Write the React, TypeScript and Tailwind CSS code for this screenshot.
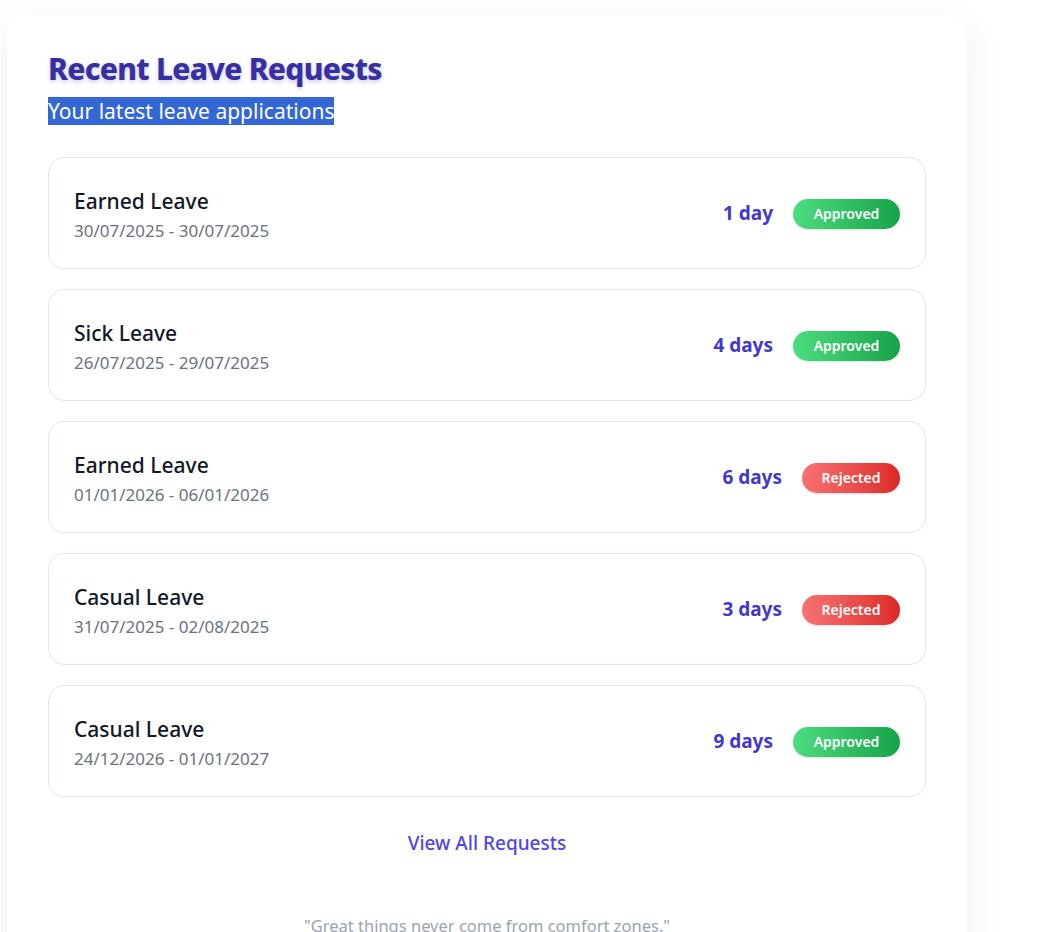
const REQUESTS = [
  { type: "Earned Leave", range: "30/07/2025 - 30/07/2025", days: "1 day", status: "Approved" },
  { type: "Sick Leave", range: "26/07/2025 - 29/07/2025", days: "4 days", status: "Approved" },
  { type: "Earned Leave", range: "01/01/2026 - 06/01/2026", days: "6 days", status: "Rejected" },
  { type: "Casual Leave", range: "31/07/2025 - 02/08/2025", days: "3 days", status: "Rejected" },
  { type: "Casual Leave", range: "24/12/2026 - 01/01/2027", days: "9 days", status: "Approved" },
];

function StatusBadge({ status }: { status: string }) {
  const approved = status === "Approved";
  return (
    <span
      className={
        approved
          ? "inline-flex h-[30px] w-[107px] items-center justify-center rounded-full bg-gradient-to-r from-[#4ade80] to-[#16a34a] text-[14px] font-semibold text-white shadow-sm"
          : "inline-flex h-[30px] w-[98px] items-center justify-center rounded-full bg-gradient-to-r from-[#f87171] to-[#dc2626] text-[14px] font-semibold text-white shadow-sm"
      }
    >
      {status}
    </span>
  );
}

export default function App() {
  return (
    <div
      className="min-h-screen bg-white pl-[7px] pt-[16px]"
      style={{ fontFamily: '"Noto Sans", "Open Sans", sans-serif' }}
    >
      <div className="w-[960px] rounded-2xl bg-white px-[41px] pb-10 pt-[32px] shadow-[0_10px_40px_rgba(0,0,0,0.07)]">
        <h2 className="text-[30px] font-extrabold leading-[42px] tracking-tight text-[#3730a3] [text-shadow:0_2px_4px_rgba(55,48,163,0.25)]">
          Recent Leave Requests
        </h2>
        <p className="mt-[7px] text-[21px] leading-[29px]">
          <span className="bg-[#3367d6] text-white">Your latest leave applications</span>
        </p>

        <div className="mt-[31px] flex flex-col gap-5">
          {REQUESTS.map((r, i) => (
            <div
              key={i}
              className="flex h-[112px] items-center justify-between rounded-2xl border border-[#dfe6fb] bg-white px-[25px]"
            >
              <div className="pt-[4px]">
                <div className="text-[21px] font-medium leading-[28px] text-[#111827]">{r.type}</div>
                <div className="mt-[4px] text-[17px] leading-[24px] text-[#6b7280]">{r.range}</div>
              </div>
              <div className="flex items-center gap-5 pt-[1px]">
                <span className="text-[19px] font-bold text-[#4338ca]">{r.days}</span>
                <StatusBadge status={r.status} />
              </div>
            </div>
          ))}
        </div>

        <div className="mt-[32px] text-center">
          <a className="text-[19px] font-medium text-[#4f46e5]">View All Requests</a>
        </div>

        <p className="mt-[56px] text-center text-[16.5px] text-[#9ca3af]">
          "Great things never come from comfort zones."
        </p>
      </div>
    </div>
  );
}
